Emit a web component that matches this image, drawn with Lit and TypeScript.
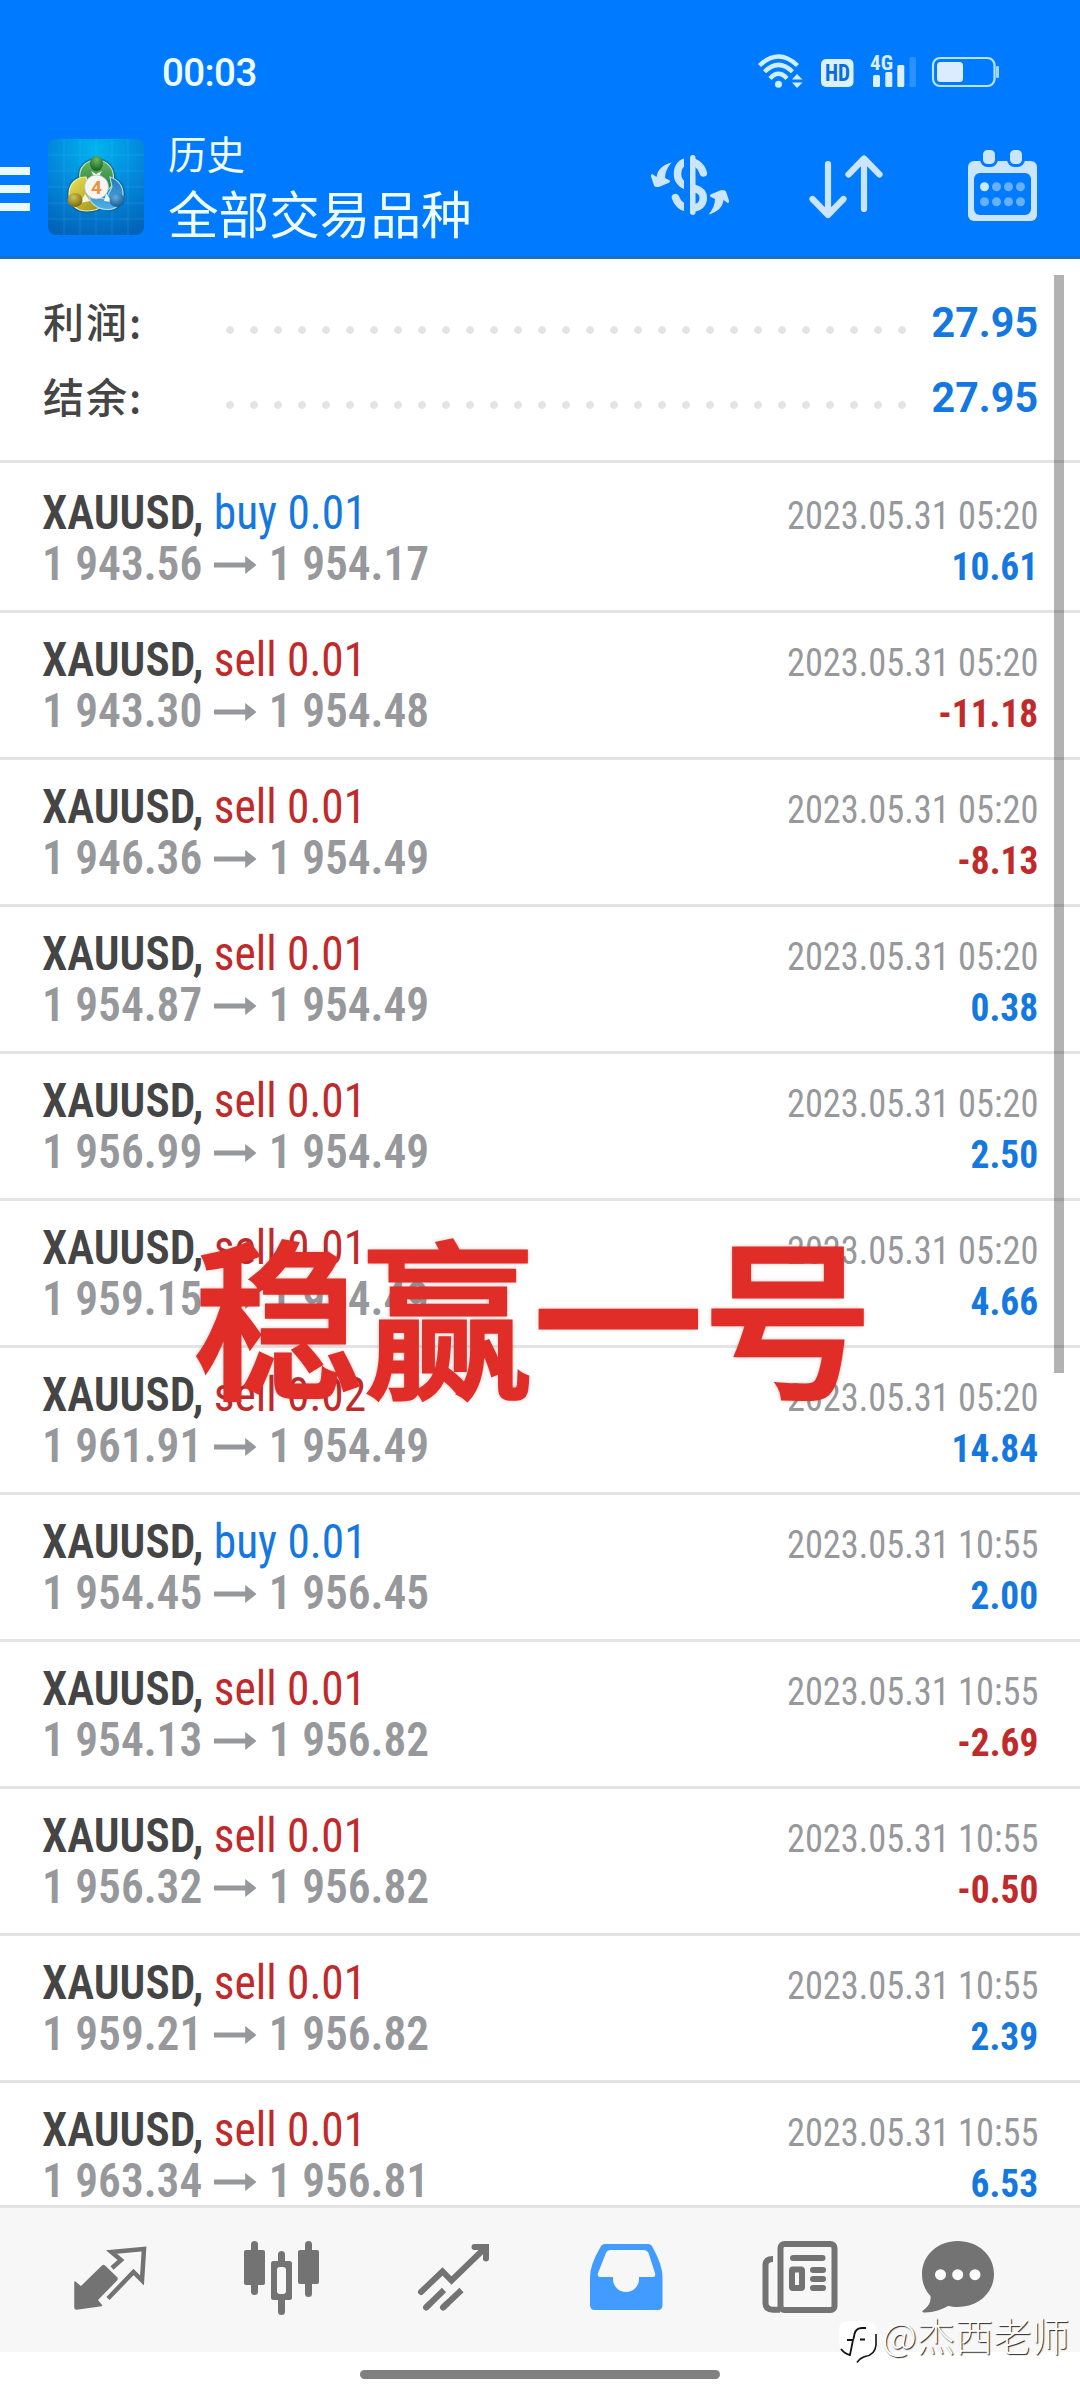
import { LitElement, html, css, svg } from "lit";
import { customElement, property } from "lit/decorators.js";

interface Deal {
  side: "buy" | "sell";
  volume: string;
  open: string;
  close: string;
  time: string;
  profit: string;
}

const deal = (side: "buy" | "sell", volume: string, open: string, close: string, time: string, profit: string): Deal => ({
  side, volume, open, close, time, profit,
});

const MORNING = "2023.05.31 05:20";
const LATER = "2023.05.31 10:55";

const DEALS: Deal[] = [
  deal("buy", "0.01", "1 943.56", "1 954.17", MORNING, "10.61"),
  deal("sell", "0.01", "1 943.30", "1 954.48", MORNING, "-11.18"),
  deal("sell", "0.01", "1 946.36", "1 954.49", MORNING, "-8.13"),
  deal("sell", "0.01", "1 954.87", "1 954.49", MORNING, "0.38"),
  deal("sell", "0.01", "1 956.99", "1 954.49", MORNING, "2.50"),
  deal("sell", "0.01", "1 959.15", "1 954.49", MORNING, "4.66"),
  deal("sell", "0.02", "1 961.91", "1 954.49", MORNING, "14.84"),
  deal("buy", "0.01", "1 954.45", "1 956.45", LATER, "2.00"),
  deal("sell", "0.01", "1 954.13", "1 956.82", LATER, "-2.69"),
  deal("sell", "0.01", "1 956.32", "1 956.82", LATER, "-0.50"),
  deal("sell", "0.01", "1 959.21", "1 956.82", LATER, "2.39"),
  deal("sell", "0.01", "1 963.34", "1 956.81", LATER, "6.53"),
];

@customElement("status-bar")
export class StatusBar extends LitElement {
  static styles = css`
    :host { display: flex; justify-content: space-between; height: 118px; padding: 50px 81px 0 162px; box-sizing: border-box; color: #eefcff; }
    .time { font: 500 38.5px/46px Roboto, "Noto Sans", sans-serif; letter-spacing: -0.6px; }
    svg { display: block; width: 242px; height: 40px; }
    .hd { font: 700 23px Roboto, sans-serif; font-stretch: 75%; fill: #0a6ce0; }
    .net { font: 700 21px Roboto, sans-serif; font-stretch: 75%; fill: #dbeeff; }
  `;
  render() {
    return html`
      <span class="time">00:03</span>
      <svg viewBox="757 50 242 40">
        <g fill="none" stroke="#cfeeff" stroke-width="4.4">
          <path d="M759.5 65.5 Q778.5 47.5 797.5 65.5"/>
          <path d="M764.5 71.8 Q778.5 58 792.5 71.8"/>
          <path d="M770 78.5 Q778.5 69 787 78.5"/>
        </g>
        <circle cx="778.5" cy="84.3" r="3.5" fill="#cfeeff"/>
        <path d="M792 79.5 L797 74 L802.5 79.5Z M792 82.5 L797 88 L802.5 82.5Z" fill="#cfeeff"/>
        <rect x="821" y="59" width="32.5" height="28" rx="5" fill="#dbf1ff"/>
        <text class="hd" x="825" y="81.2" textLength="25" lengthAdjust="spacingAndGlyphs">HD</text>
        <text class="net" x="870" y="70" textLength="23" lengthAdjust="spacingAndGlyphs">4G</text>
        <g fill="#dbf1ff">
          <rect x="873" y="75" width="7" height="12" rx="1.5"/>
          <rect x="885.3" y="72" width="7" height="15" rx="1.5"/>
          <rect x="897.3" y="65" width="7" height="22" rx="1.5"/>
          <rect x="909.5" y="57" width="6.5" height="30" rx="1.5" fill="#2b91ff"/>
        </g>
        <rect x="933" y="58" width="61.5" height="28" rx="7" fill="none" stroke="#b9e2ff" stroke-width="2.2"/>
        <rect x="937" y="62" width="26" height="20" rx="3.5" fill="#dcecff"/>
        <rect x="996" y="66" width="3" height="12" rx="1" fill="#9fd4ff"/>
      </svg>
    `;
  }
}

@customElement("app-header")
export class AppHeader extends LitElement {
  static styles = css`
    :host { display: flex; height: 141px; box-sizing: border-box; border-bottom: 3px solid #1a70c4; color: #eefcff; }
    .menu { display: flex; flex-direction: column; gap: 10px; padding-top: 49px; width: 48px; }
    .menu i { width: 30px; height: 8px; background: #eaf8ff; }
    .logo { width: 96px; height: 96px; margin-top: 21px; display: block; }
    .four { font: 700 19px Roboto, sans-serif; fill: #f0913a; }
    .titles { flex: 1; padding-left: 24px; font-family: "Noto Sans CJK SC", sans-serif; }
    .sub { font-size: 38.5px; line-height: 50px; margin-top: 9px; }
    .title { font-size: 50.6px; line-height: 66px; margin-top: 2px; }
    .actions { display: flex; padding: 28px 42px 0 0; }
    .actions svg { display: block; height: 80px; }
    .money { width: 80px; }
    .sort { width: 76px; margin-left: 78px; }
    .calendar { width: 71px; margin-left: 83px; }
  `;
  render() {
    const arrow = svg`<path d="M671.5 162.5 Q658 166 656.5 177 L652.3 174 Q650.5 174 651 176.5 L654 185.5 Q655.5 188 660 186.5 L669 182.8 Q671 181 669 180 L665 178 Q665 170 671.5 162.5Z"/>`;
    return html`
      <div class="menu"><i></i><i></i><i></i></div>
      <svg class="logo" viewBox="0 0 96 96">
        <defs>
          <radialGradient id="bg" cx=".5" cy=".1" r=".95"><stop offset="0" stop-color="#00b4ee"/><stop offset=".5" stop-color="#0389dc"/><stop offset="1" stop-color="#0264b8"/></radialGradient>
          <linearGradient id="gr" x2="0" y2="1"><stop offset="0" stop-color="#6fb765"/><stop offset="1" stop-color="#1c7a34"/></linearGradient>
          <linearGradient id="ye" x2="1" y2="1"><stop offset="0" stop-color="#ece455"/><stop offset="1" stop-color="#998a12"/></linearGradient>
          <linearGradient id="bl" x2="0" y2="1"><stop offset="0" stop-color="#2478bb"/><stop offset="1" stop-color="#4fb0e2"/></linearGradient>
          <radialGradient id="hg" cx=".5" cy=".25" r=".8"><stop offset="0" stop-color="#6fb85e"/><stop offset="1" stop-color="#0c5c22"/></radialGradient>
          <radialGradient id="hy" cx=".4" cy=".3" r=".8"><stop offset="0" stop-color="#d3c352"/><stop offset="1" stop-color="#6c5f08"/></radialGradient>
          <radialGradient id="hb" cx=".4" cy=".3" r=".8"><stop offset="0" stop-color="#62aee0"/><stop offset="1" stop-color="#0a4f8c"/></radialGradient>
        </defs>
        <rect width="96" height="96" rx="8" fill="url(#bg)"/>
        <path d="M16 0V96M32 0V96M48 0V96M64 0V96M80 0V96M0 16H96M0 32H96M0 48H96M0 64H96M0 80H96" stroke="#5cc6ff" stroke-opacity=".28" stroke-width=".8"/>
        <g fill="none" stroke="#0a4770" stroke-opacity=".45" stroke-width="4">
          <path d="M32 40 C30 28 39 21 48.5 21 C59 21 66 29 65.5 40"/>
          <path d="M38 38 C28 38 21 45 21 55 C21 66 29 72 39 72 C47 72 53 69 56 65"/>
          <path d="M62 38 C70 41 75 47 75 55 C75 65 67 71 59 70.5"/>
        </g>
        <g stroke-width="1.2">
          <path d="M32 40 C30 28 39 21 48.5 21 C59 21 66 29 65.5 40 C65 46 62 50 58 52 L49 40 L38 44Z" fill="url(#gr)" stroke="#b9e2b0"/>
          <path d="M38 38 C28 38 21 45 21 55 C21 66 29 72 39 72 C47 72 53 69 56 65 L42 58Z" fill="url(#ye)" stroke="#f3ee9c"/>
          <path d="M62 38 C70 41 75 47 75 55 C75 65 67 71 59 70.5 C49 70 42 64 41 57 L58 60 L64 48Z" fill="url(#bl)" stroke="#a9dcf6"/>
        </g>
        <path d="M43 32 L48 35 L54 32 L48.5 42Z M32 64 L37 55 L42 62Z M64 63 L58 54 L56 62Z" fill="#eef6ea"/>
        <ellipse cx="48.5" cy="24.5" rx="6.5" ry="7.5" fill="url(#hg)"/>
        <ellipse cx="27" cy="61" rx="7.5" ry="7" fill="url(#hy)"/>
        <ellipse cx="69" cy="61" rx="7.5" ry="7" fill="url(#hb)"/>
        <circle cx="48.5" cy="48" r="12" fill="#f6f6f6" stroke="#b9b9b9" stroke-width=".8"/>
        <text class="four" x="43" y="55">4</text>
      </svg>
      <div class="titles">
        <div class="sub">历史</div>
        <div class="title">全部交易品种</div>
      </div>
      <div class="actions">
        <svg class="money" viewBox="650 146 80 80" fill="#cce5ff">
          <path d="M703.3 173 C701 165 695 161.5 689 161.5 C681 161.5 677.5 167 677.5 174 C677.5 181 681 184.5 689 187 C698 189 703.3 191 703.3 198 C703.3 205 698 208.5 690 208.5 C682 208 677.5 203 675.5 197.5" fill="none" stroke="#cce5ff" stroke-width="7.5" stroke-linecap="round"/>
          <rect x="684" y="150" width="6" height="70" fill="#007aff"/>
          <rect x="690" y="155" width="5.5" height="60" rx="2.7"/>
          ${arrow}
          <g transform="rotate(180 690 188.5)">${arrow}</g>
        </svg>
        <svg class="sort" viewBox="808 146 76 80" fill="none" stroke="#cce5ff" stroke-width="6.2" stroke-linecap="round" stroke-linejoin="round">
          <path d="M828 164V214 M812.5 199L828 215L843.5 199 M864 209V159 M848.5 174.5L864 158.5L879.5 174.5"/>
        </svg>
        <svg class="calendar" viewBox="967 146 71 80">
          <rect x="968" y="161" width="69" height="60" rx="6" fill="#cce5ff"/>
          <rect x="974" y="173" width="57" height="42" rx="6" fill="#007aff"/>
          <g fill="#cce5ff" stroke="#007aff" stroke-width="3">
            <rect x="981.5" y="148.500" width="15" height="17" rx="6"/>
            <rect x="1008.5" y="148.500" width="15" height="17" rx="6"/>
          </g>
          ${[0, 1, 2, 3].map((c) => [0, 1].map((r) => svg`<circle cx=${984.5 + c * 12} cy=${186.7 + r * 15} r="4.500" fill=${c + r ? "#66b0ff" : "#cce9ff"}/>`))}
        </svg>
      </div>
    `;
  }
}

@customElement("deal-row")
export class DealRow extends LitElement {
  @property({ attribute: false }) deal!: Deal;
  static styles = css`
    :host { display: block; height: 147px; box-sizing: border-box; border-bottom: 3px solid #e4e4e4; padding: 21px 42px 0 42px; font-family: Roboto, "Noto Sans", sans-serif; font-stretch: 75%; }
    .line { display: flex; justify-content: space-between; align-items: baseline; height: 51px; line-height: 51px; white-space: nowrap; }
    .left { display: flex; font-size: 48px; transform: scaleX(0.945); transform-origin: left; }
    .symbol { font-weight: 650; color: #454545; white-space: pre; }
    .time { font-size: 39.4px; color: #97989c; transform: scaleX(0.923); transform-origin: right; }
    .prices { font-weight: 650; color: #97989c; align-items: center; }
    .prices svg { width: 45px; height: 20px; margin: 3px 13.5px 0 12px; }
    .profit { font-size: 39.4px; font-weight: 700; transform: scaleX(0.95); transform-origin: right; }
    .blue { color: #1478e0; }
    .red { color: #c02a2a; }
  `;
  render() {
    const d = this.deal;
    return html`
      <div class="line">
        <div class="left"><span class="symbol">XAUUSD, </span><span class="${d.side === "buy" ? "blue" : "red"}">${d.side} ${d.volume}</span></div>
        <span class="time">${d.time}</span>
      </div>
      <div class="line">
        <div class="left prices"><span>${d.open}</span><svg viewBox="0 0 45 20" preserveAspectRatio="none"><path d="M0 7.500H33V1L45 10L33 19V12.500H0Z" fill="#97989c"/></svg><span>${d.close}</span></div>
        <span class="profit ${d.profit.startsWith("-") ? "red" : "blue"}">${d.profit}</span>
      </div>
    `;
  }
}

@customElement("tab-bar")
export class TabBar extends LitElement {
  static styles = css`
    :host { display: grid; grid-template-columns: 171px 171px 174px 174px 158px 76px; height: 147px; box-sizing: border-box; padding: 30px 0 0 72px; background: #f7f7f7; border-top: 3px solid #e4e4e4; }
    svg { display: block; width: 76px; height: 80px; }
  `;
  render() {
    return html`
      <svg viewBox="72 2238 76 80">
        <path d="M75 2282L81 2287L102.5 2266Q103.5 2265 104.5 2266L116.5 2277.5Q117.5 2279 116.5 2280L97 2300L101.5 2305.5L76.5 2309Q75 2309 75 2307.5Z" fill="#737373" stroke="#737373" stroke-width="1.5" stroke-linejoin="round"/>
        <path d="M112 2268L121 2260L111.5 2252L144 2249L142 2280.5L133.5 2272L108 2298.5" fill="none" stroke="#737373" stroke-width="4.5"/>
      </svg>
      <svg viewBox="243 2238 76 80" fill="#737373">
        <rect x="251" y="2241" width="7" height="54" rx="3.5"/><rect x="244" y="2250" width="21" height="35" rx="2"/>
        <rect x="278" y="2251" width="7" height="64" rx="3.5"/><rect x="271" y="2261" width="21" height="39" rx="2.5"/>
        <rect x="277" y="2267" width="9" height="27" rx="3" fill="#f7f7f7"/>
        <rect x="305" y="2241" width="7" height="56" rx="3.5"/><rect x="298" y="2250" width="21" height="34" rx="2"/>
      </svg>
      <svg viewBox="414 2238 76 80" fill="none" stroke="#737373" stroke-width="6">
        <path d="M421 2292L442.5 2271.5L451.5 2280.5L485 2248M474.5 2247H486V2258.5" stroke-linecap="round"/>
        <path d="M426 2307.5L444 2290M443 2307.5L461.5 2290"/>
        <path d="M426 2307.5L430 2303.6M443 2307.5L447 2303.7" stroke-linecap="round"/>
      </svg>
      <svg viewBox="588 2238 76 80">
        <path fill="#429bff" fill-rule="evenodd" d="M605 2244H648Q651 2244 652.5 2247Q662.5 2265 662.5 2277V2305Q662.5 2310 658 2310H595Q590 2310 590 2305V2277Q590 2265 600.5 2247Q602 2244 605 2244ZM611 2250Q607 2250 606 2253L598 2273Q597 2277 600 2277H613V2279A13 13 0 0 0 639 2279V2277H653Q656 2277 655 2273L648.5 2253Q647 2250 643 2250Z"/>
      </svg>
      <svg viewBox="762 2238 76 80" fill="none" stroke="#737373" stroke-width="6">
        <rect x="780.5" y="2244" width="54" height="66" rx="4"/>
        <path d="M773 2259Q765.5 2259 765.5 2265V2303Q765.5 2309.7 773 2309.7H780"/>
        <path d="M793 2258H822.5M813 2270H823M813 2279H823M813 2288H823" stroke-linecap="round"/>
        <rect x="792" y="2269.5" width="10" height="18.5" rx="1"/>
      </svg>
      <svg viewBox="920 2238 76 80" fill="#737373">
        <path d="M957.7 2241C978 2241 994 2255 994 2274C994 2293 978 2307 957.7 2307C954 2307 951 2306.5 948 2306C940 2310.5 932 2313 923.5 2312.5Q921.5 2312 923 2310.5C929 2306 931 2302 930.5 2296C925 2290 922 2283 922 2274C922 2255 938 2241 957.7 2241Z"/>
        <g fill="#fff"><circle cx="940.5" cy="2274.7" r="5.5"/><circle cx="957.7" cy="2274.7" r="5.5"/><circle cx="975" cy="2274.7" r="5.5"/></g>
      </svg>
    `;
  }
}

@customElement("app-root")
export class AppRoot extends LitElement {
  static styles = css`
    :host { display: flex; flex-direction: column; position: relative; width: 1080px; height: 2400px; overflow: hidden; background: #fff; }
    .top { background: #007aff; height: 259px; flex: none; }
    .content { height: 1946px; flex: none; overflow: hidden; }
    .summary { padding: 26px 42px 25px 43px; border-bottom: 3px solid #e4e4e4; }
    .total { display: flex; height: 75px; line-height: 75px; }
    .label { width: 175px; font: 500 41px/75px "Noto Sans CJK SC", sans-serif; letter-spacing: 2px; color: #454545; margin-top: -2px; }
    .dots { width: 696px; background: radial-gradient(circle at 12px 45px, #e4e4e4 3.5px, transparent 4.2px) 0 0 / 24px 75px repeat-x; }
    .value { flex: 1; text-align: right; font: 700 42px/75px Roboto, sans-serif; color: #1478e0; transform: scaleX(0.98); transform-origin: right; }
    .deals { padding-top: 3px; }
    .home { width: 360px; height: 9px; border-radius: 5px; background: #808080; margin: 18px auto 0; }
    .scroll { position: absolute; left: 1054px; top: 275px; width: 10px; height: 1098px; background: rgba(0, 0, 0, 0.3); }
    .banner { position: absolute; left: 193px; top: 1227px; font: 500 170px/170px "Noto Sans CJK SC", sans-serif; -webkit-text-stroke: 3px #e12d27; color: #e12d27; white-space: nowrap; text-shadow: 0 0 5px rgba(120, 30, 30, 0.5); }
    .mark { position: absolute; left: 838px; top: 2312px; display: flex; align-items: flex-start; font: 300 38.2px/46px "Noto Sans CJK SC", sans-serif; color: #fff; white-space: nowrap; text-shadow: 1px 1px 1px rgba(0, 0, 0, 0.85); }
    .mark svg { width: 42px; height: 56px; margin-right: 2px; }
  `;
  render() {
    return html`
      <div class="top"><status-bar></status-bar><app-header></app-header></div>
      <div class="content">
        <div class="summary">
          ${["利润", "结余"].map((t) => html`<div class="total"><span class="label">${t}:</span><span class="dots"></span><span class="value">27.95</span></div>`)}
        </div>
        <div class="deals">${DEALS.map((d) => html`<deal-row .deal=${d}></deal-row>`)}</div>
      </div>
      <tab-bar></tab-bar>
      <div class="home"></div>
      <div class="scroll"></div>
      <div class="banner">稳赢一号</div>
      <div class="mark">
        <svg viewBox="838 2312 42 56">
          <path d="M848 2321H867Q876 2321 876 2331V2345Q876 2355 866 2357L857 2363L856 2357L851 2353L847 2354Q839 2350 839 2342V2331Q839 2321 848 2321Z" fill="#fff"/>
          <path d="M876 2334V2345Q875 2355 865 2356.5Q860 2358 857 2362.5" fill="none" stroke="#111" stroke-width="1.6"/>
          <path d="M866 2328H862Q856 2328 854.5 2334L853.5 2339M847 2340H853L850 2355Q845 2354 841 2349M860 2339.5H865" fill="none" stroke="#111" stroke-width="1.800"/>
        </svg>
        <span>@杰西老师</span>
      </div>
    `;
  }
}
